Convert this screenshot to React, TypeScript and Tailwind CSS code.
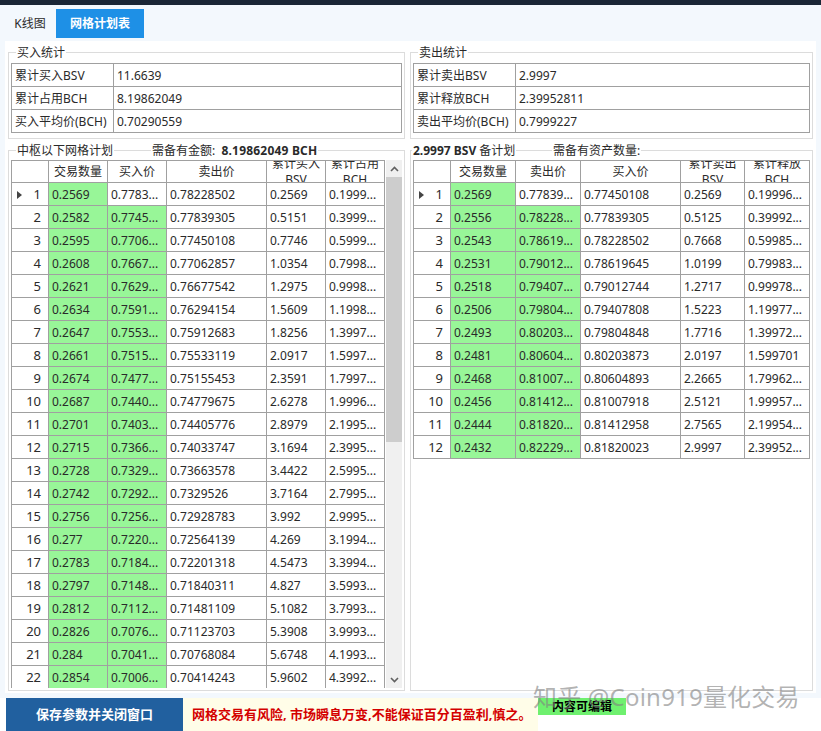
import type { ReactNode } from 'react'

const font = { fontFamily: '"Noto Sans", "Noto Sans CJK SC", sans-serif' }

const buyRows = [
  ['0.2569', '0.7783...', '0.78228502', '0.2569', '0.1999...'],
  ['0.2582', '0.7745...', '0.77839305', '0.5151', '0.3999...'],
  ['0.2595', '0.7706...', '0.77450108', '0.7746', '0.5999...'],
  ['0.2608', '0.7667...', '0.77062857', '1.0354', '0.7998...'],
  ['0.2621', '0.7629...', '0.76677542', '1.2975', '0.9998...'],
  ['0.2634', '0.7591...', '0.76294154', '1.5609', '1.1998...'],
  ['0.2647', '0.7553...', '0.75912683', '1.8256', '1.3997...'],
  ['0.2661', '0.7515...', '0.75533119', '2.0917', '1.5997...'],
  ['0.2674', '0.7477...', '0.75155453', '2.3591', '1.7997...'],
  ['0.2687', '0.7440...', '0.74779675', '2.6278', '1.9996...'],
  ['0.2701', '0.7403...', '0.74405776', '2.8979', '2.1995...'],
  ['0.2715', '0.7366...', '0.74033747', '3.1694', '2.3995...'],
  ['0.2728', '0.7329...', '0.73663578', '3.4422', '2.5995...'],
  ['0.2742', '0.7292...', '0.7329526', '3.7164', '2.7995...'],
  ['0.2756', '0.7256...', '0.72928783', '3.992', '2.9995...'],
  ['0.277', '0.7220...', '0.72564139', '4.269', '3.1994...'],
  ['0.2783', '0.7184...', '0.72201318', '4.5473', '3.3994...'],
  ['0.2797', '0.7148...', '0.71840311', '4.827', '3.5993...'],
  ['0.2812', '0.7112...', '0.71481109', '5.1082', '3.7993...'],
  ['0.2826', '0.7076...', '0.71123703', '5.3908', '3.9993...'],
  ['0.284', '0.7041...', '0.70768084', '5.6748', '4.1993...'],
  ['0.2854', '0.7006...', '0.70414243', '5.9602', '4.3992...'],
]

const sellRows = [
  ['0.2569', '0.77839...', '0.77450108', '0.2569', '0.19996...'],
  ['0.2556', '0.78228...', '0.77839305', '0.5125', '0.39992...'],
  ['0.2543', '0.78619...', '0.78228502', '0.7668', '0.59985...'],
  ['0.2531', '0.79012...', '0.78619645', '1.0199', '0.79983...'],
  ['0.2518', '0.79407...', '0.79012744', '1.2717', '0.99978...'],
  ['0.2506', '0.79804...', '0.79407808', '1.5223', '1.19977...'],
  ['0.2493', '0.80203...', '0.79804848', '1.7716', '1.39972...'],
  ['0.2481', '0.80604...', '0.80203873', '2.0197', '1.599701'],
  ['0.2468', '0.81007...', '0.80604893', '2.2665', '1.79962...'],
  ['0.2456', '0.81412...', '0.81007918', '2.5121', '1.99957...'],
  ['0.2444', '0.81820...', '0.81412958', '2.7565', '2.19954...'],
  ['0.2432', '0.82229...', '0.81820023', '2.9997', '2.39952...'],
]

function StatTable({ rows, labelWidth }: { rows: string[][]; labelWidth: number }) {
  return (
    <table className="w-full table-fixed border-collapse text-[12px] text-[#2a2a2a]">
      <colgroup>
        <col style={{ width: labelWidth }} />
        <col />
      </colgroup>
      <tbody>
        {rows.map((r) => (
          <tr key={r[0]} className="h-[23px]">
            <td className="overflow-hidden border border-[#a0a0a0] pt-[1px] pl-[3px] whitespace-nowrap">{r[0]}</td>
            <td className="border border-[#a0a0a0] pt-[1px] pl-[3px]">{r[1]}</td>
          </tr>
        ))}
      </tbody>
    </table>
  )
}

function Group({ children, className }: { children: ReactNode; className: string }) {
  return <div className={`relative border border-[#dcdcdc] ${className}`}>{children}</div>
}

function Label({ children, className }: { children: ReactNode; className: string }) {
  return (
    <span className={`absolute top-[-8px] h-[16px] bg-white px-[1px] text-[12px] leading-[16px] whitespace-nowrap text-[#2a2a2a] ${className}`}>
      {children}
    </span>
  )
}

function Chevron({ up }: { up?: boolean }) {
  return (
    <svg width="9" height="6" viewBox="0 0 9 6" fill="none" stroke="#606060" strokeWidth="1.6">
      <path d={up ? 'M1 5 L4.5 1.5 L8 5' : 'M1 1 L4.5 4.5 L8 1'} />
    </svg>
  )
}

function HeadCell({ lines }: { lines: string[] }) {
  return (
    <th className="border border-[#a0a0a0] p-0 font-normal">
      <div className="flex h-[21px] flex-col items-center justify-center overflow-hidden leading-[16px]">
        {lines.map((l) => (
          <span key={l} className="shrink-0 whitespace-nowrap">{l}</span>
        ))}
      </div>
    </th>
  )
}

function GridTable({
  heads,
  rows,
  widths,
}: {
  heads: string[][]
  rows: string[][]
  widths: number[]
}) {
  return (
    <table className="table-fixed border-collapse text-[12px] text-[#2a2a2a]" style={{ width: widths.reduce((a, b) => a + b, 0) }}>
      <colgroup>
        {widths.map((w, i) => (
          <col key={i} style={{ width: w }} />
        ))}
      </colgroup>
      <thead>
        <tr className="h-[22px]">
          <th className="border border-[#a0a0a0] p-0" />
          {heads.map((h) => (
            <HeadCell key={h.join('')} lines={h} />
          ))}
        </tr>
      </thead>
      <tbody>
        {rows.map((r, i) => (
          <tr key={i} className="h-[23px]">
            <td className="relative border border-[#a0a0a0] pt-[1px] pr-[7px] text-right text-[13px]">
              {i === 0 && (
                <span className="absolute top-[8px] left-[5px] h-0 w-0 border-y-[4px] border-l-[5px] border-y-transparent border-l-[#444]" />
              )}
              {i + 1}
            </td>
            {r.map((v, j) => (
              <td
                key={j}
                className={`overflow-hidden border border-[#a0a0a0] pt-[1px] pl-[3px] whitespace-nowrap ${
                  j === 0 || (j === 1 && i > 0) ? 'bg-[#98f698]' : ''
                }`}
              >
                {v}
              </td>
            ))}
          </tr>
        ))}
      </tbody>
    </table>
  )
}

export default function App() {
  return (
    <div className="relative flex h-[731px] w-[821px] flex-col overflow-hidden bg-white" style={font}>
      <div className="h-[5px] shrink-0 bg-[#1a2636]" />

      <div className="flex flex-1 flex-col bg-[#f3f8fd]">
        <div className="flex h-[36px] shrink-0 items-start pt-[4px] pl-[6px] text-[12px]">
          <div className="flex h-[29px] w-[50px] items-center justify-center pr-[2px] text-[#2a2a2a]">K线图</div>
          <div className="flex h-[29px] w-[88px] items-center justify-center bg-[#1e90e6] font-bold text-white">
            网格计划表
          </div>
        </div>

        <div className="mr-[5px] ml-[5px] flex h-[652px] shrink-0 gap-[5px] bg-white pt-[11px] pl-[3px]">
          <div className="flex w-[397px] flex-col gap-[11px]">
            <Group className="h-[87px] px-[2px] pt-[10px]">
              <Label className="left-[7px]">买入统计</Label>
              <StatTable
                labelWidth={102}
                rows={[
                  ['累计买入BSV', '11.6639'],
                  ['累计占用BCH', '8.19862049'],
                  ['买入平均价(BCH)', '0.70290559'],
                ]}
              />
            </Group>
            <Group className="h-[541px] px-[2px] pt-[9px]">
              <Label className="left-[7px]">中枢以下网格计划</Label>
              <Label className="left-[142px]">
                需备有金额:&nbsp;&nbsp;<b className="tracking-[0.2px]">8.19862049 BCH</b>
              </Label>
              <div className="flex h-[528px] overflow-hidden">
                <div className="w-[375px] shrink-0 overflow-hidden">
                  <GridTable
                    widths={[37, 59, 59, 100, 59, 59]}
                    heads={[['交易数量'], ['买入价'], ['卖出价'], ['累计买入', 'BSV'], ['累计占用', 'BCH']]}
                    rows={buyRows}
                  />
                </div>
                <div className="flex w-[16px] shrink-0 flex-col bg-[#f0f0f0]">
                  <div className="flex h-[17px] items-center justify-center">
                    <Chevron up />
                  </div>
                  <div className="h-[265px] bg-[#cdcdcd]" />
                  <div className="flex-1" />
                  <div className="flex h-[17px] items-center justify-center">
                    <Chevron />
                  </div>
                </div>
              </div>
            </Group>
          </div>

          <div className="flex w-[403px] flex-col gap-[11px]">
            <Group className="h-[87px] px-[2px] pt-[10px]">
              <Label className="left-[7px]">卖出统计</Label>
              <StatTable
                labelWidth={102}
                rows={[
                  ['累计卖出BSV', '2.9997'],
                  ['累计释放BCH', '2.39952811'],
                  ['卖出平均价(BCH)', '0.7999227'],
                ]}
              />
            </Group>
            <Group className="h-[541px] px-[2px] pt-[9px]">
              <Label className="left-[1px]">
                <b>2.9997 BSV</b> 备计划
              </Label>
              <Label className="left-[141px]">需备有资产数量:</Label>
              <div className="h-[528px] overflow-hidden">
                <GridTable
                  widths={[37, 65, 65, 100, 64, 65]}
                  heads={[['交易数量'], ['卖出价'], ['买入价'], ['累计卖出', 'BSV'], ['累计释放', 'BCH']]}
                  rows={sellRows}
                />
              </div>
            </Group>
          </div>
        </div>

        <div className="mt-[5px] flex flex-1 items-start bg-white pl-[6px] font-bold">
          <div className="flex h-[33px] w-[177px] items-center justify-center bg-[#21609f] text-[13px] text-white">
            保存参数并关闭窗口
          </div>
          <div className="flex h-[33px] w-[355px] items-center bg-[#fffde8] pl-[9px] text-[13px] text-[#d40000]">
            网格交易有风险, 市场瞬息万变,不能保证百分百盈利,慎之。
          </div>
          <div className="flex h-[17px] w-[88px] items-center justify-center bg-[#6ff06f] text-[12px] text-black">
            内容可编辑
          </div>
        </div>
      </div>

      {/* zhihu watermark */}
      <span className="absolute top-[682px] left-[533px] text-[24px] leading-[30px] tracking-[0.2px] whitespace-nowrap text-[#808080]/60">
        知乎 @Coin919量化交易
      </span>
    </div>
  )
}
